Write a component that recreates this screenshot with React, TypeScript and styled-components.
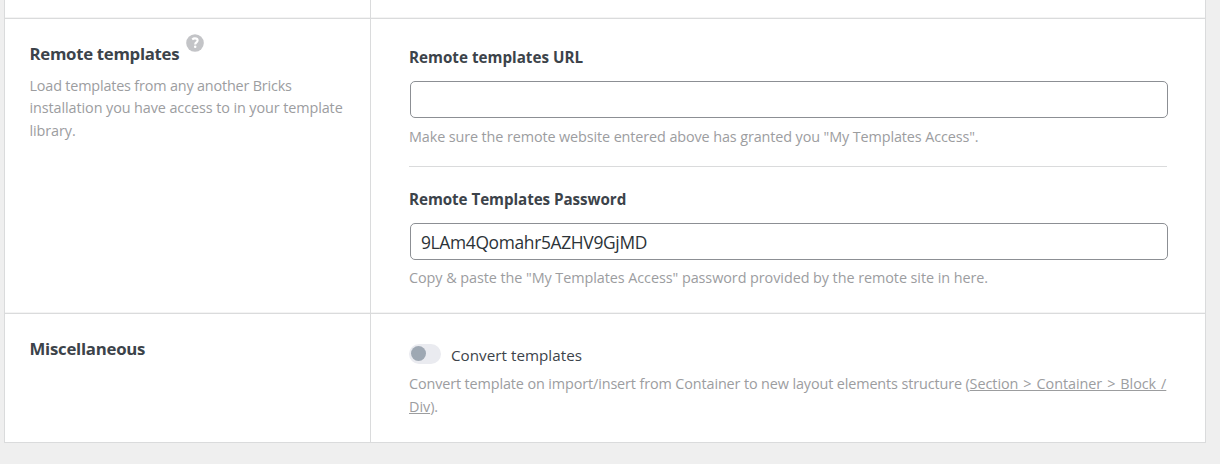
import React from "react";
import styled, { createGlobalStyle } from "styled-components";

const GlobalStyle = createGlobalStyle`
  *, *::before, *::after { box-sizing: border-box; }
  html, body { margin: 0; padding: 0; }
  body {
    height: 464px;
    overflow: hidden;
    background: #efefef;
    color: #3c434a;
    font-family: "Open Sans", "Noto Sans", sans-serif;
  }
`;

const Panel = styled.main`
  display: flex;
  flex-direction: column;
  width: 1202px;
  height: 443px;
  margin-left: 4px;
  background: #fff;
  border: solid #dadbdc;
  border-width: 0 1px 1px;
`;

const Row = styled.section<{ $height: number }>`
  display: grid;
  grid-template-columns: 366px 1fr;
  height: ${(p) => p.$height}px;

  &:not(:last-child) {
    border-bottom: 1px solid #dadbdc;
    box-shadow: inset 0 -1px 0 #f4f4f4;
  }
`;

const Aside = styled.div`
  padding: 23px 20px 0 24.5px;
  border-right: 1px solid #dadbdc;
`;

const Content = styled.div`
  padding: 26px 37px 0 38px;
`;

const Heading = styled.h3<{ $track: number }>`
  display: flex;
  margin: 0;
  font-size: 16.8px;
  font-weight: 700;
  line-height: 24px;
  letter-spacing: ${(p) => p.$track}px;
  white-space: nowrap;
`;

const HelpIcon = styled.svg`
  flex: none;
  width: 18px;
  height: 18px;
  margin: -8px 0 0 7px;
`;

const Description = styled.p<{ $gap: number; $track: number }>`
  margin: ${(p) => p.$gap}px 0 0;
  color: #9c9d9f;
  font-size: 14.4px;
  line-height: 22.5px;
  letter-spacing: ${(p) => p.$track}px;
  white-space: nowrap;
`;

const Tracked = styled.span<{ $track: number }>`
  letter-spacing: ${(p) => p.$track}px;
`;

const DocLink = styled.a`
  color: inherit;
  letter-spacing: -0.051px;
  word-spacing: 1.3px;
  text-decoration: underline;
  text-decoration-thickness: 1px;
  text-underline-offset: 1px;
`;

const Label = styled.label<{ $track: number }>`
  display: block;
  font-size: 15.2px;
  font-weight: 700;
  line-height: 24px;
  letter-spacing: ${(p) => p.$track}px;
`;

const TextInput = styled.input`
  display: block;
  width: 758px;
  height: 37px;
  margin: 12px 0 0 1px;
  padding: 1px 10px 0;
  border: 1px solid #8c8f94;
  border-radius: 5px;
  outline: none;
  background: #fff;
  color: #2c3338;
  font: 400 17.4px "Open Sans", "Noto Sans", sans-serif;
  letter-spacing: -0.33px;
`;

const Divider = styled.hr`
  height: 1px;
  margin: 17.5px 1px 20px 0;
  border: 0;
  background: #dadbdc;
`;

const ToggleRow = styled.div`
  display: flex;
  margin-top: 4px;
`;

const Toggle = styled.button`
  display: flex;
  width: 32px;
  height: 20px;
  padding: 2px;
  border: 0;
  border-radius: 10px;
  background: #eaebf0;
`;

const Knob = styled.span`
  width: 15px;
  height: 15px;
  border-radius: 50%;
  background: #9ea8b3;
`;

const ToggleLabel = styled.span`
  margin: -1px 0 0 10px;
  font-size: 15.2px;
  line-height: 24px;
  letter-spacing: 0.03px;
`;

export default function App() {
  return (
    <>
      <GlobalStyle />
      <Panel>
        <Row $height={19}>
          <Aside />
          <Content />
        </Row>

        <Row $height={295}>
          <Aside>
            <Heading $track={-0.3}>
              Remote templates
              <HelpIcon viewBox="0 0 18 18" aria-label="Help">
                <circle cx="9" cy="9" r="8.8" fill="#c3c4c7" />
                <path
                  d="M6.2 5.5Q7.4 4.4 8.9 4.4q2.7 0 2.7 2.1 0 1.2-1.3 2-1.1.7-1.1 1.9"
                  fill="none"
                  stroke="#fff"
                  strokeWidth="2.1"
                />
                <rect x="8" y="11.5" width="2.4" height="2.4" rx="1" fill="#fff" />
              </HelpIcon>
            </Heading>
            <Description $gap={8.5} $track={-0.09}>
              <Tracked $track={-0.175}>Load templates from any another Bricks</Tracked>
              <br />
              installation you have access to in your template
              <br />
              library.
            </Description>
          </Aside>
          <Content>
            <Label htmlFor="remote-url" $track={0.01}>Remote templates URL</Label>
            <TextInput id="remote-url" type="text" />
            <Description $gap={8} $track={-0.11}>
              Make sure the remote website entered above has granted you "My Templates Access".
            </Description>
            <Divider />
            <Label htmlFor="remote-password" $track={-0.06}>Remote Templates Password</Label>
            <TextInput id="remote-password" type="text" defaultValue="9LAm4Qomahr5AZHV9GjMD" />
            <Description $gap={7} $track={-0.065}>
              Copy &amp; paste the "My Templates Access" password provided by the remote site in here.
            </Description>
          </Content>
        </Row>

        <Row $height={128}>
          <Aside>
            <Heading $track={-0.25}>Miscellaneous</Heading>
          </Aside>
          <Content>
            <ToggleRow>
              <Toggle type="button" role="switch" aria-checked="false" aria-label="Convert templates">
                <Knob />
              </Toggle>
              <ToggleLabel>Convert templates</ToggleLabel>
            </ToggleRow>
            <Description $gap={6} $track={-0.12}>
              Convert template on import/insert from Container to new layout elements structure (
              <DocLink>
                Section &gt; Container &gt; Block /<br />
                Div
              </DocLink>
              ).
            </Description>
          </Content>
        </Row>
      </Panel>
    </>
  );
}
